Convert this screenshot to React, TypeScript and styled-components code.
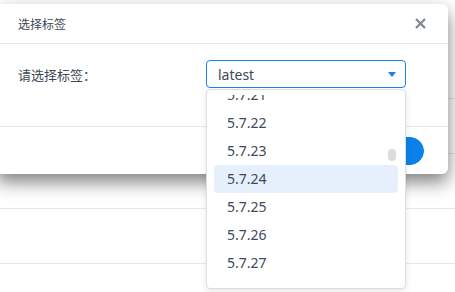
import React, { useLayoutEffect, useRef } from "react";
import styled, { createGlobalStyle } from "styled-components";

const GlobalStyle = createGlobalStyle`
  html, body {
    margin: 0;
    padding: 0;
    background: #ffffff;
  }
  body {
    font-family: "Noto Sans", "Noto Sans CJK SC", sans-serif;
    color: #3d4853;
  }
`;

const Page = styled.div`
  position: relative;
  width: 455px;
  height: 292px;
  overflow: hidden;
  background: #ffffff;
`;

const BgList = styled.div`
  padding-top: 44px;
`;

const BgRow = styled.div`
  height: 55px;
  box-sizing: border-box;
  border-bottom: 1px solid #e6eaee;
`;

const Dialog = styled.div`
  position: absolute;
  left: -4px;
  top: 4px;
  width: 452px;
  background: #ffffff;
  border-radius: 6px;
  box-shadow: 0 8px 18px rgba(0, 0, 0, 0.5);
`;

const Header = styled.div`
  height: 40px;
  box-sizing: border-box;
  border-bottom: 1px solid #e3e8ec;
  display: flex;
  align-items: center;
  justify-content: space-between;
  padding: 0 22px 0 22px;
`;

const Title = styled.div`
  font-size: 12px;
  color: #3d4853;
`;

const CloseButton = styled.button`
  border: 0;
  padding: 0;
  background: none;
  width: 11px;
  height: 11px;
  display: flex;
  cursor: pointer;
`;

const Body = styled.div`
  display: grid;
  grid-template-columns: 188px 200px;
  align-items: center;
  padding: 16px 0 38px 22px;
  border-bottom: 1px solid #e3e8ec;
`;

const Label = styled.div`
  font-size: 13px;
  color: #3d4853;
`;

const SelectBox = styled.div`
  height: 28px;
  box-sizing: border-box;
  border: 1px solid #1a82e8;
  border-radius: 4px;
  display: flex;
  align-items: center;
  justify-content: space-between;
  padding: 0 9px 0 11px;
  font-size: 14px;
  color: #3d4853;
`;

const Caret = styled.span`
  width: 0;
  height: 0;
  border-left: 4px solid transparent;
  border-right: 4px solid transparent;
  border-top: 5px solid #1a7fe6;
`;

const Footer = styled.div`
  height: 47px;
  display: flex;
  align-items: center;
  justify-content: flex-end;
  gap: 10px;
  padding-right: 24px;
`;

const Button = styled.button<{ $primary?: boolean }>`
  height: 28px;
  min-width: 70px;
  padding: 0 16px;
  border-radius: 14px;
  font-family: inherit;
  font-size: 12px;
  border: 1px solid ${(p) => (p.$primary ? "#0a82ea" : "#cfd6dd")};
  background: ${(p) => (p.$primary ? "#0a82ea" : "#ffffff")};
  color: ${(p) => (p.$primary ? "#ffffff" : "#3d4853")};
`;

const Menu = styled.div`
  position: absolute;
  left: 206px;
  top: 89px;
  width: 200px;
  height: 200px;
  box-sizing: border-box;
  padding: 5px 0 7px;
  border: 1px solid #d8dfe6;
  border-radius: 4px;
  background: #ffffff;
  box-shadow: 0 2px 6px rgba(0, 0, 0, 0.1);
`;

const MenuScroll = styled.div`
  height: 100%;
  overflow-y: auto;
  scrollbar-width: none;
  box-sizing: border-box;
  padding: 0 7px;
  &::-webkit-scrollbar {
    display: none;
  }
`;

const MenuItem = styled.div<{ $active?: boolean }>`
  height: 28px;
  line-height: 28px;
  padding-left: 13px;
  border-radius: 4px;
  font-size: 14px;
  color: #3d4a5a;
  background: ${(p) => (p.$active ? "#e5f0fc" : "transparent")};
`;

const Thumb = styled.div`
  position: absolute;
  left: 181px;
  top: 59px;
  width: 8px;
  height: 12px;
  border-radius: 4px;
  background: #dcdcdc;
`;

const tags: string[] = ["latest"];
for (let i = 4; i <= 44; i++) tags.push(`5.7.${i}`);

const ITEM = 28;
const first = tags.indexOf("5.7.21");

export default function App() {
  const scrollRef = useRef<HTMLDivElement>(null);

  useLayoutEffect(() => {
    if (scrollRef.current) scrollRef.current.scrollTop = 14 + first * ITEM;
  }, []);

  return (
    <Page>
      <GlobalStyle />
      <BgList>
        <BgRow />
        <BgRow />
        <BgRow />
        <BgRow />
        <BgRow />
      </BgList>

      <Dialog>
        <Header>
          <Title>选择标签</Title>
          <CloseButton aria-label="关闭">
            <svg width="11" height="11" viewBox="0 0 11 11">
              <path d="M1 1 L10 10 M10 1 L1 10" stroke="#7f868e" strokeWidth="2.2" />
            </svg>
          </CloseButton>
        </Header>
        <Body>
          <Label>请选择标签：</Label>
          <SelectBox>
            <span>latest</span>
            <Caret />
          </SelectBox>
        </Body>
        <Footer>
          <Button>取消</Button>
          <Button $primary>确定</Button>
        </Footer>
      </Dialog>

      <Menu>
        <MenuScroll ref={scrollRef}>
          {tags.map((t) => (
            <MenuItem key={t} $active={t === "5.7.24"}>
              {t}
            </MenuItem>
          ))}
        </MenuScroll>
        <Thumb />
      </Menu>
    </Page>
  );
}
